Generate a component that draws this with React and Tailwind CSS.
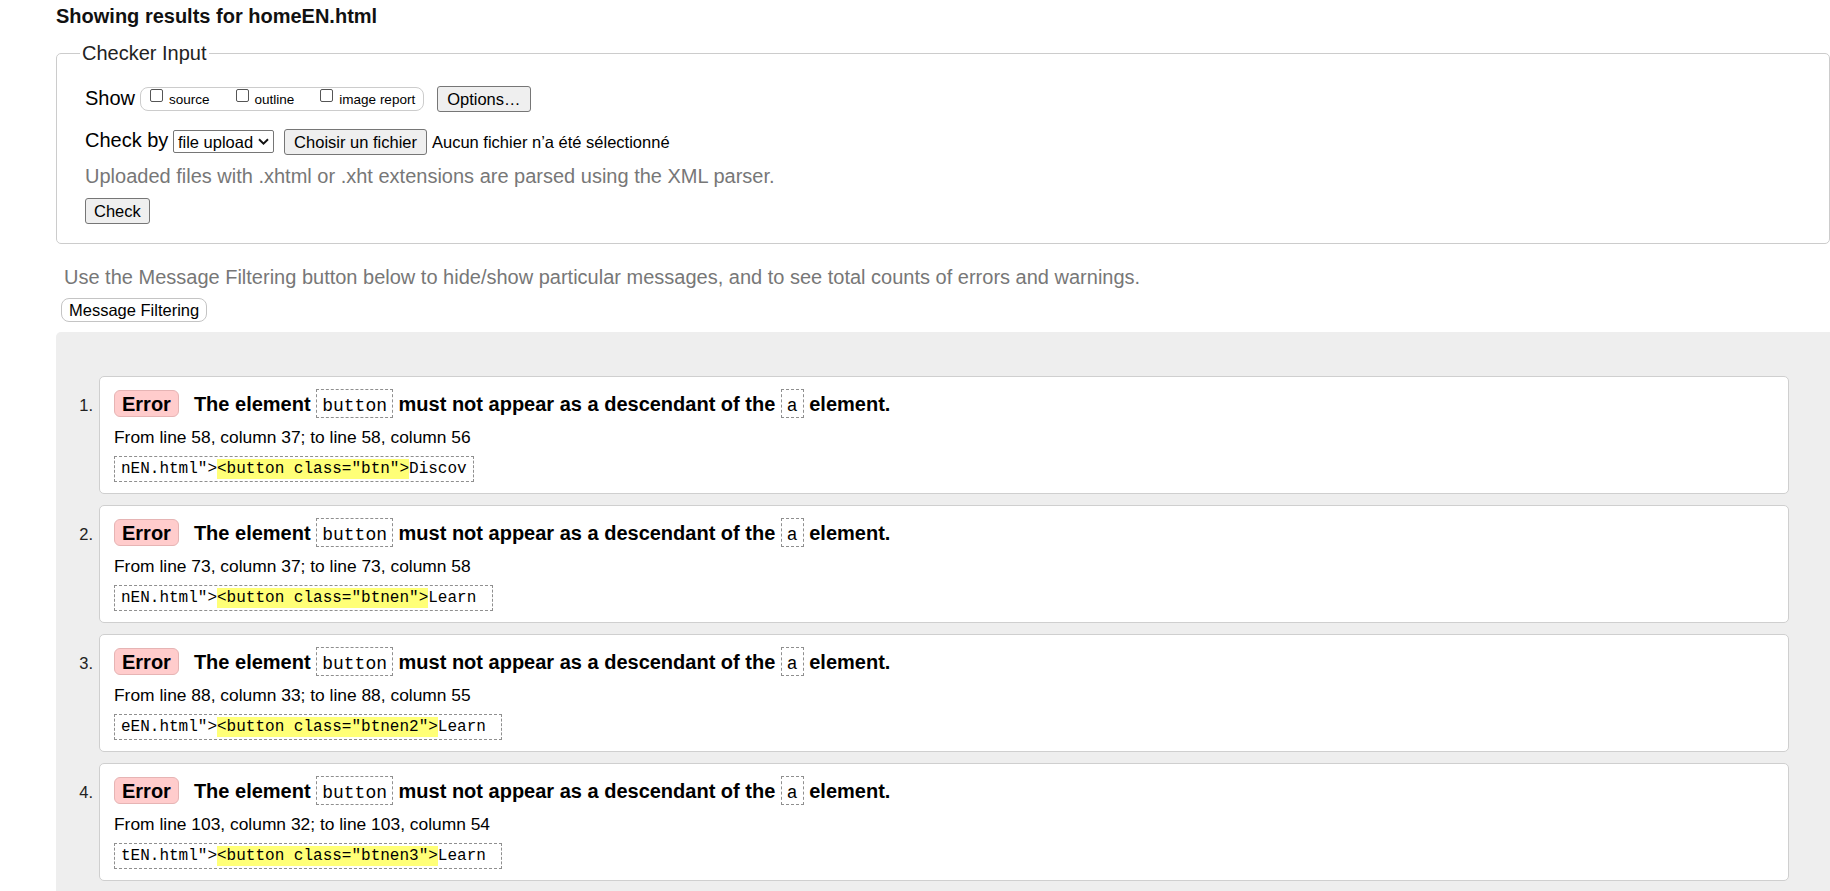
const messages = [
  {
    n: 1,
    where: 'From line 58, column 37; to line 58, column 56',
    pre: 'nEN.html">',
    hl: '<button class="btn">',
    post: 'Discov',
  },
  {
    n: 2,
    where: 'From line 73, column 37; to line 73, column 58',
    pre: 'nEN.html">',
    hl: '<button class="btnen">',
    post: 'Learn ',
  },
  {
    n: 3,
    where: 'From line 88, column 33; to line 88, column 55',
    pre: 'eEN.html">',
    hl: '<button class="btnen2">',
    post: 'Learn ',
  },
  {
    n: 4,
    where: 'From line 103, column 32; to line 103, column 54',
    pre: 'tEN.html">',
    hl: '<button class="btnen3">',
    post: 'Learn ',
  },
]

const btn =
  'h-[26px] rounded-[3px] border border-[#767676] bg-[#efefef] text-[16.5px] leading-[20px] text-black'

function Checkbox({ label }) {
  return (
    <label className="flex items-center">
      <input
        type="checkbox"
        className="mb-[8px] ml-[4px] mr-[6px] h-[13px] w-[13px] appearance-none rounded-[2px] border border-[#555] bg-white"
      />
      <span className="mt-[1px] text-[13.5px] leading-[16px]">{label}</span>
    </label>
  )
}

function Code({ children }) {
  return (
    <code className="inline-block border border-dashed border-[#8f8f8f] px-[5px] pb-[1px] pt-[6px] font-['Liberation_Mono',monospace] text-[18px] font-normal leading-[20px]">
      {children}
    </code>
  )
}

function MessageCard({ msg }) {
  return (
    <li className="mb-[11px] flex">
      <span className="mt-[17px] w-[43px] shrink-0 pr-[6px] text-right text-[16.5px] leading-[24px] text-[#222]">
        {msg.n}.
      </span>
      <div className="mr-[41px] flex-1 rounded-[5px] border border-[#cfcfcf] bg-white pb-[11px] pl-[14px] pt-[12px]">
        <div className="text-[20px] font-bold leading-[24px] text-black">
          <span className="mr-[15px] inline-block rounded-[6px] border border-[#e6b4b4] bg-[#ffcccc] px-[7px] pb-[2px] pt-[3px] leading-[20px]">
            Error
          </span>
          The element{' '}
          <Code>button</Code>{' '}
          must not appear as a descendant of the{' '}
          <Code>a</Code>{' '}
          element.
        </div>
        <div className="mt-[8px] text-[17.4px] leading-[22px] text-black">{msg.where}</div>
        <div className="mt-[8px] flex">
          <div className="whitespace-pre border border-dashed border-[#8f8f8f] px-[6px] font-['Liberation_Mono',monospace] text-[16px] leading-[24px] text-black">
            {msg.pre}
            <span className="bg-[#ffff77] py-[1px]">{msg.hl}</span>
            {msg.post}
          </div>
        </div>
      </div>
    </li>
  )
}

export default function App() {
  return (
    <div className="min-h-screen bg-white pl-[56px] pt-[4px] font-['Liberation_Sans',Arial,sans-serif] text-black">
      <h2 className="text-[20px] font-bold leading-[24px] text-[#111]">Showing results for homeEN.html</h2>

      <fieldset className="mt-[13px] rounded-[5px] border border-[#cccccc] px-[23px] pb-[19px] pt-[21px]">
        <legend className="px-[2px] text-[20px] leading-[24px] text-[#222]">Checker Input</legend>

        <div className="pl-[5px]">
          <div className="flex h-[26px] items-center">
            <span className="mb-[3px] text-[20px] leading-[24px]">Show</span>
            <div className="ml-[5px] flex h-[24px] items-center rounded-[8px] border border-[#cccccc] pl-[5px] pr-[8px]">
              <Checkbox label="source" />
              <span className="w-[22px]" />
              <Checkbox label="outline" />
              <span className="w-[22px]" />
              <Checkbox label="image report" />
            </div>
            <button className={`${btn} ml-[13px] px-[9px]`}>Options…</button>
          </div>

          <div className="mt-[17px] flex h-[25px] items-center">
            <span className="mb-[3px] text-[20px] leading-[24px]">Check by</span>
            <div className="ml-[4.5px] flex h-[23px] items-center rounded-[2px] border border-[#767676] bg-white pl-[4px] pr-[4px] text-[16.5px] leading-[20px]">
              <span>file upload</span>
              <svg className="ml-[5px]" width="11" height="7" viewBox="0 0 11 7" fill="none">
                <path d="M1 1.2 L5.5 5.6 L10 1.2" stroke="#111" strokeWidth="1.9" />
              </svg>
            </div>
            <button className={`${btn} ml-[10px] h-[25px] px-[9px]`}>Choisir un fichier</button>
            <span className="ml-[5px] text-[16.5px] leading-[20px]">Aucun fichier n’a été sélectionné</span>
          </div>

          <p className="mt-[10px] text-[20px] leading-[24px] text-[#777]">
            Uploaded files with .xhtml or .xht extensions are parsed using the XML parser.
          </p>

          <div className="mt-[10px] flex">
            <button className={`${btn} px-[8px]`}>Check</button>
          </div>
        </div>
      </fieldset>

      <p className="ml-[8px] mt-[21px] text-[20px] leading-[24px] text-[#777]">
        Use the Message Filtering button below to hide/show particular messages, and to see total counts of errors and warnings.
      </p>
      <div className="mt-[9px] flex">
        <button className="ml-[5px] h-[24px] rounded-[8px] border border-[#c4c4c4] bg-white px-[7px] text-[16.5px] leading-[20px]">
          Message Filtering
        </button>
      </div>

      <div className="mt-[10px] rounded-tl-[5px] bg-[#eeeeee] pb-[30px] pt-[44px]">
        <ol>
          {messages.map((msg) => (
            <MessageCard key={msg.n} msg={msg} />
          ))}
        </ol>
      </div>
    </div>
  )
}
